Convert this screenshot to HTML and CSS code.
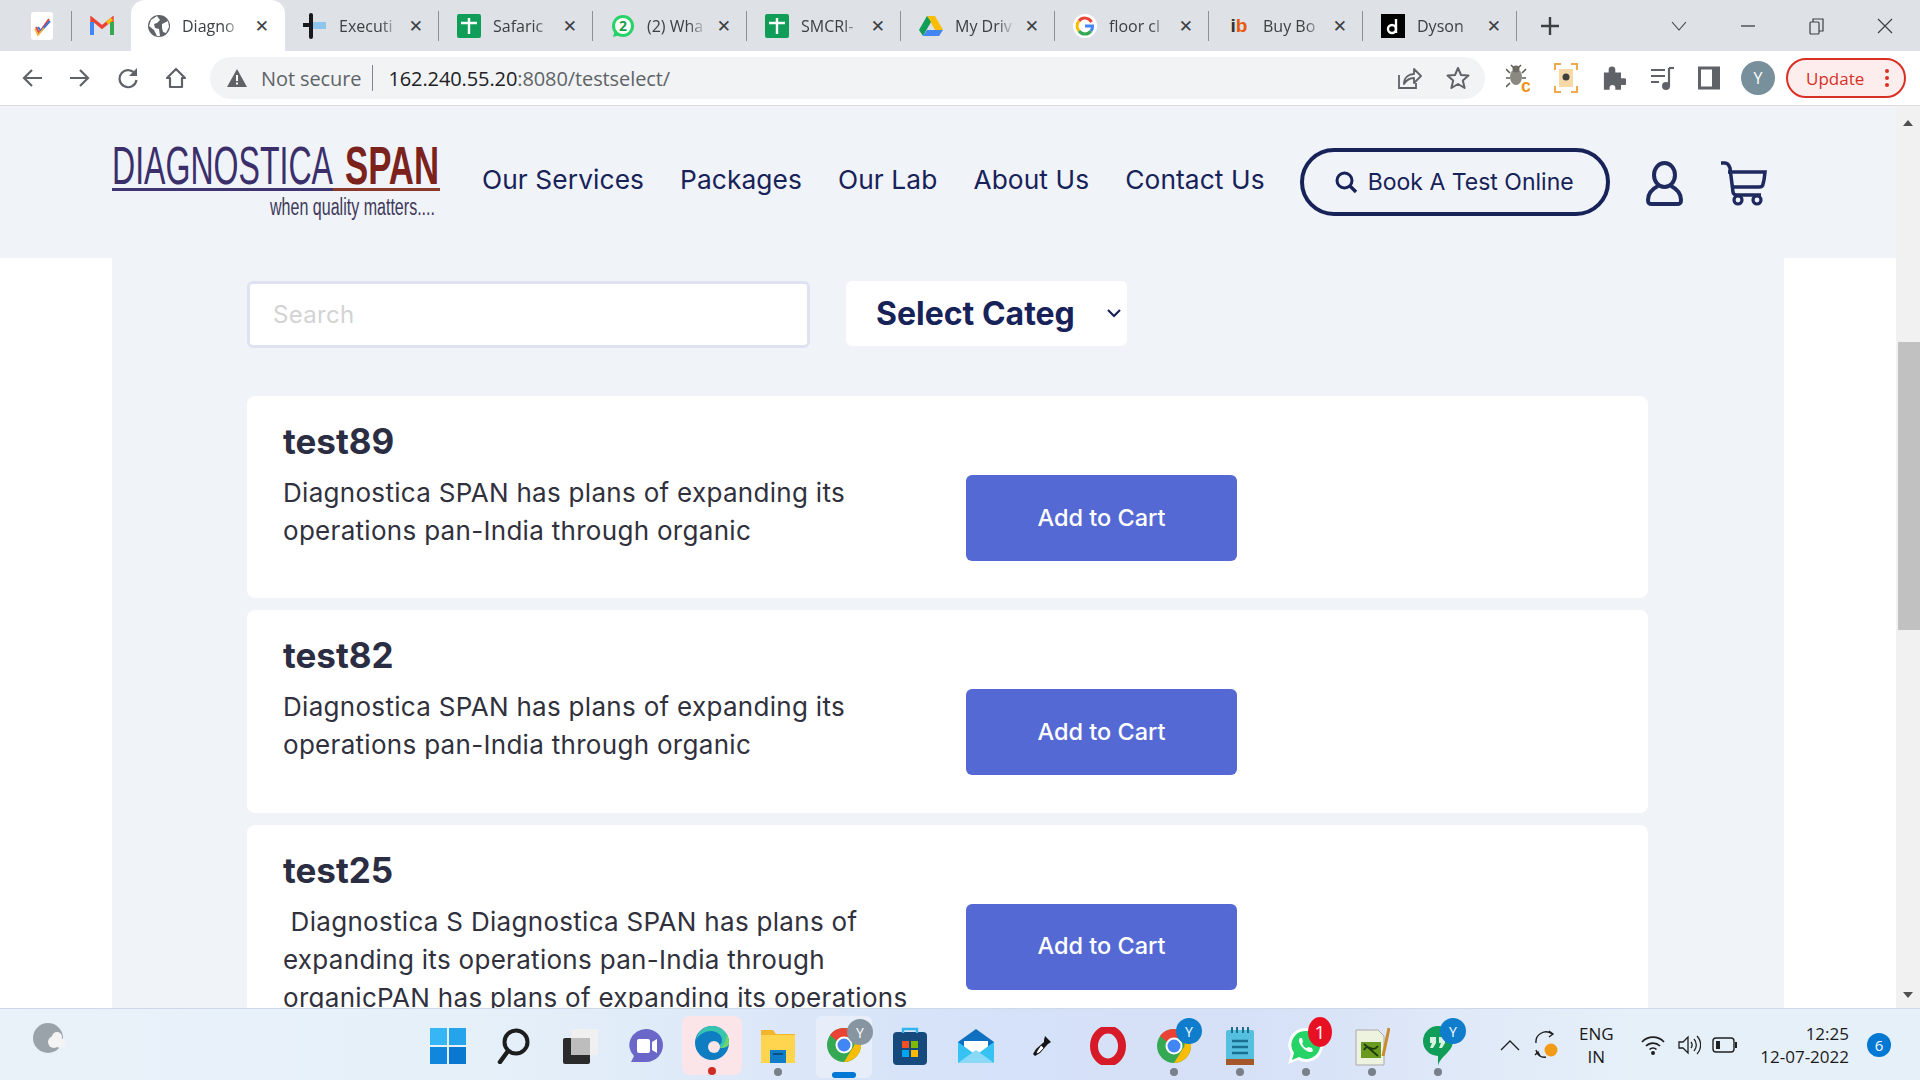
FILE: index.html
```html
<!DOCTYPE html>
<html lang="en">
<head>
<meta charset="utf-8">
<title>Diagnostica SPAN</title>
<link rel="stylesheet" href="styles.css">
</head>
<body>
<div class="screen">
  <div class="tabstrip">
    <div class="tab pinned sep"><svg width="24" height="28" viewBox="0 0 24 28"><rect x="1" y="0" width="22" height="28" rx="3" fill="#fff"/><path d="M6 15l3 6L19 7" fill="none" stroke="#e0483e" stroke-width="2"/><path d="M8 15l3 4L20 9" fill="none" stroke="#3a6fd8" stroke-width="2"/><path d="M5 17l3 6 6-7" fill="none" stroke="#f3b23c" stroke-width="1.6"/></svg></div>
    <div class="tab pinned"><svg width="24" height="20" viewBox="0 0 24 20"><path d="M2 18V3l10 8 10-8v15" fill="none" stroke="#ea4335" stroke-width="3.4"/><path d="M2 6v13" stroke="#4285f4" stroke-width="4"/><path d="M22 6v13" stroke="#34a853" stroke-width="4"/><path d="M17 7l5-4" stroke="#fbbc04" stroke-width="3.4"/></svg></div>
    <div class="tab active"><svg width="22" height="22" viewBox="0 0 22 22"><circle cx="11" cy="11" r="11" fill="#5f6368"/><path d="M9 1l3 4-3 3-3 1 1 4 4 1 1 7-3 0-3-6-5-4 2-6zM14 9l6-3 1 6-3 6-3-1-1-4z" fill="#fff"/></svg><span class="title">Diagno</span><span class="x">✕</span></div>
    <div class="tab sep"><svg width="24" height="26" viewBox="0 0 24 26"><rect x="6" y="0" width="4" height="26" rx="2" fill="#16181c"/><rect x="0" y="10" width="10" height="4" fill="#16181c"/><rect x="10" y="9" width="13" height="7" fill="#8ec6ee"/></svg><span class="title">Executi</span><span class="x">✕</span></div>
    <div class="tab sep"><svg width="24" height="24" viewBox="0 0 24 24"><rect width="24" height="24" rx="2" fill="#0f9d58"/><path d="M12 4v16M4 9h16" stroke="#fff" stroke-width="2.4"/></svg><span class="title">Safaric</span><span class="x">✕</span></div>
    <div class="tab sep"><svg width="24" height="24" viewBox="0 0 24 24"><circle cx="12" cy="12" r="11" fill="#25d366"/><path d="M2 23l2-7 5 5z" fill="#25d366"/><circle cx="12" cy="12" r="8" fill="#fff"/><text x="12" y="17" text-anchor="middle" class="wa-n">2</text></svg><span class="title">(2) Wha</span><span class="x">✕</span></div>
    <div class="tab sep"><svg width="24" height="24" viewBox="0 0 24 24"><rect width="24" height="24" rx="2" fill="#0f9d58"/><path d="M12 4v16M4 9h16" stroke="#fff" stroke-width="2.4"/></svg><span class="title">SMCRI-</span><span class="x">✕</span></div>
    <div class="tab sep"><svg width="24" height="22" viewBox="0 0 24 22"><path d="M8 1h8l8 14h-8z" fill="#fbbc04"/><path d="M8 1L0 15l4 6 8-14z" fill="#0f9d58"/><path d="M4 21h16l4-6H8z" fill="#4285f4"/></svg><span class="title">My Driv</span><span class="x">✕</span></div>
    <div class="tab sep"><svg width="24" height="24" viewBox="0 0 24 24"><circle cx="12" cy="12" r="12" fill="#fff"/><path d="M18.5 8A7.500 7.500 0 0 0 6 7" fill="none" stroke="#ea4335" stroke-width="3"/><path d="M6 7a7.500 7.500 0 0 0 0 10" fill="none" stroke="#fbbc04" stroke-width="3"/><path d="M6 17a7.500 7.500 0 0 0 12 0" fill="none" stroke="#34a853" stroke-width="3"/><path d="M18 17a7.500 7.500 0 0 0 1.500-5H12" fill="none" stroke="#4285f4" stroke-width="3"/></svg><span class="title">floor cl</span><span class="x">✕</span></div>
    <div class="tab sep"><span class="ib"><b>i</b><i>b</i></span><span class="title">Buy Bo</span><span class="x">✕</span></div>
    <div class="tab sep"><svg width="24" height="24" viewBox="0 0 24 24"><rect width="24" height="24" fill="#000"/><circle cx="11" cy="15" r="4" fill="none" stroke="#fff" stroke-width="2.400"/><path d="M15 5v14" stroke="#fff" stroke-width="2.400"/></svg><span class="title">Dyson</span><span class="x">✕</span></div>
    <div class="plus"><svg width="20" height="20" viewBox="0 0 20 20"><path d="M10 1v18M1 10h18" stroke="#3c4043" stroke-width="2.400"/></svg></div>
    <div class="winctl">
      <svg class="wc-a" width="18" height="10" viewBox="0 0 18 10"><path d="M2 1l7 8 7-8" fill="none" stroke="#3c4043" stroke-width="1.100"/></svg>
      <svg class="wc-b" width="16" height="2" viewBox="0 0 16 2"><path d="M1 1h14" stroke="#3c4043" stroke-width="1.300"/></svg>
      <svg class="wc-c" width="18" height="18" viewBox="0 0 18 18"><rect x="2" y="5" width="9" height="12" rx="1" fill="none" stroke="#3c4043" stroke-width="1.200"/><path d="M5 5V2h10v12h-4" fill="none" stroke="#3c4043" stroke-width="1.200"/></svg>
      <svg class="wc-d" width="16" height="16" viewBox="0 0 16 16"><path d="M1 1l14 14M15 1L1 15" stroke="#3c4043" stroke-width="1.200"/></svg>
    </div>
  </div>

  <div class="toolbar">
    <svg class="nav-i first" width="22" height="20" viewBox="0 0 22 20"><path d="M21 10H3M11 2l-8 8 8 8" fill="none" stroke="#5f6368" stroke-width="2.200"/></svg>
    <svg class="nav-i" width="22" height="20" viewBox="0 0 22 20"><path d="M1 10h18M11 2l8 8-8 8" fill="none" stroke="#5f6368" stroke-width="2.200"/></svg>
    <svg class="nav-i" width="22" height="22" viewBox="0 0 22 22"><path d="M18.500 7.500A8.500 8.500 0 1 0 19.500 13" fill="none" stroke="#5f6368" stroke-width="2.200"/><path d="M20 1v8h-8z" fill="#5f6368"/></svg>
    <svg class="nav-i" width="22" height="22" viewBox="0 0 22 22"><path d="M11 2L2 11h3v9h12v-9h3z" fill="none" stroke="#5f6368" stroke-width="2.200" stroke-linejoin="round"/></svg>
    <div class="omni">
      <svg width="20" height="18" viewBox="0 0 20 18"><path d="M10 0l10 18H0z" fill="#5f6368"/><path d="M10 6v6M10 13.500v2" stroke="#fff" stroke-width="2"/></svg>
      <span class="ns">Not secure</span><span class="omni-sep"></span>
      <span class="url"><b>162.240.55.20</b>:8080/testselect/</span>
      <svg class="share" width="26" height="24" viewBox="0 0 26 24"><path d="M3 9v13h17v-5" fill="none" stroke="#5f6368" stroke-width="1.800"/><path d="M8 18c0-7 5-10 10-10V3l7 7-7 7v-5c-4 0-7 1-10 6z" fill="none" stroke="#5f6368" stroke-width="1.800" stroke-linejoin="round"/></svg>
      <svg class="star" width="24" height="24" viewBox="0 0 24 24"><path d="M12 2l3 7 7.500.6-5.700 4.900 1.800 7.500L12 18l-6.600 4 1.800-7.500L1.500 9.600 9 9z" fill="none" stroke="#5f6368" stroke-width="2" stroke-linejoin="round"/></svg>
    </div>
    <div class="exts">
      <svg width="24" height="30" viewBox="0 0 24 30"><ellipse cx="10" cy="14" rx="6" ry="8" fill="#8a8a80"/><circle cx="10" cy="6" r="3.500" fill="#6d6d66"/><path d="M4 10L0 6M4 15H0M4 20l-4 4M16 10l4-4M16 15h4M5 2l3 3M15 2l-3 3" stroke="#5f5f58" stroke-width="1.600"/><text x="15" y="29" class="ext-c">c</text></svg>
      <svg width="24" height="30" viewBox="0 0 24 30"><rect x="5" y="6" width="14" height="18" fill="#f7d9a8"/><path d="M1 7V1h6M17 1h6v6M23 23v6h-6M7 29H1v-6" fill="none" stroke="#f0a94c" stroke-width="2"/><circle cx="12" cy="14" r="3.500" fill="#40403c"/></svg>
      <svg width="24" height="26" viewBox="0 0 24 26"><path d="M2 8h5V5a3.500 3.500 0 0 1 7 0v3h6v6h3a3.500 3.500 0 0 1 0 7h-3v5H14v-2a3 3 0 0 0-6 0v2H2z" fill="#5f6368" transform="scale(.95)"/></svg>
      <svg width="24" height="26" viewBox="0 0 24 26"><path d="M1 5h14M1 11h14M1 17h8" stroke="#5f6368" stroke-width="2.200"/><path d="M19 3v18" stroke="#5f6368" stroke-width="2.200"/><circle cx="16" cy="21" r="4" fill="#5f6368"/><path d="M19 3h5" stroke="#5f6368" stroke-width="2.200"/></svg>
      <svg width="22" height="24" viewBox="0 0 22 24"><rect x="1.500" y="2" width="19" height="20" fill="none" stroke="#5f6368" stroke-width="3"/><rect x="14" y="2" width="7" height="20" fill="#5f6368"/></svg>
      <div class="avatar">Y</div>
    </div>
    <div class="update"><span>Update</span><i class="dots"><em></em><em></em><em></em></i></div>
  </div>

  <div class="browser">
    <div class="viewport">
      <header class="site-head">
        <svg class="logo" width="328" height="80" viewBox="0 0 328 80">
          <text x="0" y="42" class="lg-a" textLength="221" lengthAdjust="spacingAndGlyphs">DIAGNOSTICA</text>
          <text x="233" y="42" class="lg-b" textLength="94" lengthAdjust="spacingAndGlyphs">SPAN</text>
          <rect x="0" y="46" width="221" height="3" fill="#3f3570"/><rect x="221" y="46" width="107" height="3" fill="#8b3a2c"/>
          <text x="158" y="73" class="lg-c" textLength="165" lengthAdjust="spacingAndGlyphs">when quality matters....</text>
        </svg>
        <nav class="menu"><a>Our Services</a><a>Packages</a><a>Our Lab</a><a>About Us</a><a>Contact Us</a></nav>
        <div class="book"><svg width="24" height="24" viewBox="0 0 24 24"><circle cx="10.500" cy="10.500" r="7.500" fill="none" stroke="#172259" stroke-width="3"/><path d="M16 16l6 6" stroke="#172259" stroke-width="3.400"/></svg><span>Book A Test Online</span></div>
        <svg class="u-ic" width="37" height="45" viewBox="0 0 37 45"><ellipse cx="18.500" cy="14" rx="10.500" ry="12" fill="none" stroke="#1e2a5e" stroke-width="4"/><path d="M12 25C6 28 2 33 2 39c0 3 1 4 4 4h25c3 0 4-1 4-4 0-6-4-11-10-14" fill="none" stroke="#1e2a5e" stroke-width="4" stroke-linejoin="round"/></svg>
        <svg class="c-ic" width="47" height="45" viewBox="0 0 47 45"><path d="M1 2h4c3 0 4 2 5 5l3 24c0 2 2 3 4 3h24" fill="none" stroke="#1e2a5e" stroke-width="3.500"/><path d="M8 11h37l-1 8M12 26h27c3 0 4-1 4-3l1-4" fill="none" stroke="#1e2a5e" stroke-width="3.500"/><circle cx="18" cy="39" r="4" fill="none" stroke="#1e2a5e" stroke-width="3.200"/><circle cx="37" cy="39" r="4" fill="none" stroke="#1e2a5e" stroke-width="3.200"/></svg>
      </header>
      <main class="main">
        <div class="filters">
          <div class="search">Search</div>
          <div class="select"><span>Select Categ</span><svg width="14" height="9" viewBox="0 0 14 9"><path d="M1 1l6 6 6-6" fill="none" stroke="#172259" stroke-width="2.200"/></svg></div>
        </div>
        <article class="card">
          <div><h2>test89</h2><p>Diagnostica SPAN has plans of expanding its operations pan-India through organic</p></div>
          <a class="cart">Add to Cart</a>
        </article>
        <article class="card">
          <div><h2>test82</h2><p>Diagnostica SPAN has plans of expanding its operations pan-India through organic</p></div>
          <a class="cart">Add to Cart</a>
        </article>
        <article class="card">
          <div><h2>test25</h2><p>&nbsp;Diagnostica S Diagnostica SPAN has plans of expanding its operations pan-India through organicPAN has plans of expanding its operations pan-India through organic</p></div>
          <a class="cart">Add to Cart</a>
        </article>
      </main>
    </div>
    <div class="scrollbar">
      <svg width="10" height="6" viewBox="0 0 10 6"><path d="M5 0l5 6H0z" fill="#505050"/></svg>
      <div class="track"><div class="thumb"></div></div>
      <svg width="10" height="6" viewBox="0 0 10 6"><path d="M5 6L0 0h10z" fill="#505050"/></svg>
    </div>
  </div>

  <footer class="taskbar">
    <svg class="widget" width="36" height="32" viewBox="0 0 36 32"><circle cx="16" cy="16" r="15" fill="#9ba3aa"/><circle cx="22" cy="20" r="6" fill="#f4f4f4"/><circle cx="28" cy="21" r="5" fill="#f4f4f4"/><circle cx="25" cy="15" r="5" fill="#f4f4f4"/></svg>
    <div class="apps">
      <div class="app"><svg width="36" height="36" viewBox="0 0 36 36"><rect width="17" height="17" fill="#37b6f6"/><rect x="19" width="17" height="17" fill="#25a4ec"/><rect y="19" width="17" height="17" fill="#1086dc"/><rect x="19" y="19" width="17" height="17" fill="#0a78d0"/></svg></div>
      <div class="app"><svg width="34" height="36" viewBox="0 0 34 36"><circle cx="19" cy="14" r="11.500" fill="none" stroke="#1d1d1d" stroke-width="4"/><path d="M11 23L3 34" stroke="#1d1d1d" stroke-width="4.500" stroke-linecap="round"/></svg></div>
      <div class="app"><svg width="36" height="36" viewBox="0 0 36 36"><rect x="9" y="1" width="27" height="26" rx="2" fill="#f0f0f0"/><rect x="1" y="10" width="27" height="26" rx="2" fill="#2b2b2b"/><rect x="9" y="10" width="19" height="17" fill="#bdbdbd"/></svg></div>
      <div class="app"><svg width="36" height="36" viewBox="0 0 36 36"><path d="M18 1a17 16 0 0 1 17 16c0 9-7 17-17 17H3l3-6a17 16 0 0 1 12-27z" fill="#6a67c8"/><rect x="9" y="11" width="13" height="14" rx="2" fill="#fff"/><path d="M24 14l5-3v14l-5-3z" fill="#fff"/></svg></div>
      <div class="app edge"><svg width="36" height="36" viewBox="0 0 36 36"><circle cx="18" cy="18" r="17" fill="#0f7dc2"/><path d="M2 15C4 5 12 1 18 1c10 0 17 8 17 17 0 4-5 5-9 5-3 0-5-1-5-2 5 0 7-3 7-6 0-5-5-9-11-9-5 0-12 3-15 9z" fill="#37c5b0"/><path d="M33 9a17 17 0 0 1 2 9c0 4-5 5-9 5 5-2 6-9 7-14z" fill="#6ed66c"/><circle cx="20" cy="22" r="6" fill="#fbe5e8"/></svg><i class="dot red"></i></div>
      <div class="app"><svg width="36" height="36" viewBox="0 0 36 36"><path d="M1 2h12l3 4h19v29H1z" fill="#f3b52e"/><rect x="1" y="7" width="34" height="28" fill="#ffd54f"/><path d="M10 22h16v13H10z" fill="#0f7dc8"/><path d="M13 26h10" stroke="#0a4f85" stroke-width="2"/></svg><i class="dot"></i></div>
      <div class="app chrome"><svg width="36" height="36" viewBox="0 0 36 36"><circle cx="18" cy="18" r="17" fill="#34a853"/><path d="M18 1a17 17 0 0 1 15 9H18a8 8 0 0 0-7 4L4 8A17 17 0 0 1 18 1z" fill="#ea4335"/><path d="M33 10a17 17 0 0 1-15 25l8-13a8 8 0 0 0 0-12z" fill="#fbbc04"/><circle cx="18" cy="18" r="8.500" fill="#fff"/><circle cx="18" cy="18" r="6.500" fill="#4285f4"/></svg><span class="pbadge grey">Y</span><i class="bar"></i></div>
      <div class="app"><svg width="34" height="38" viewBox="0 0 34 38"><rect x="0" y="5" width="34" height="33" rx="4" fill="#174a7c"/><path d="M10 6V2h14v4" fill="none" stroke="#32b5ee" stroke-width="2.400"/><rect x="9" y="14" width="7" height="7" fill="#f25022"/><rect x="18" y="14" width="7" height="7" fill="#7fba00"/><rect x="9" y="23" width="7" height="7" fill="#00a4ef"/><rect x="18" y="23" width="7" height="7" fill="#ffb900"/></svg></div>
      <div class="app"><svg width="36" height="36" viewBox="0 0 36 36"><path d="M18 1l18 13v21H0V14z" fill="#0f6fc0"/><path d="M6 13h24v10l-12 6-12-6z" fill="#fff"/><path d="M0 14l18 13 18-13v21H0z" fill="#36c2f2"/><path d="M0 35l18-13 18 13z" fill="#8ad9f7"/></svg></div>
      <div class="app"><svg width="20" height="22" viewBox="0 0 20 22"><path d="M13 1l6 6-3 2-1 1-7 8-5 3-2-2 3-5 8-7 0-2z" fill="#151515"/><path d="M9 10l3 3-5 5-3 1 1-3z" fill="#fff" stroke="#151515" stroke-width=".8"/></svg></div>
      <div class="app"><svg width="36" height="38" viewBox="0 0 36 38"><ellipse cx="18" cy="19" rx="14" ry="16.500" fill="none" stroke="#d71a27" stroke-width="8"/></svg></div>
      <div class="app"><svg width="36" height="36" viewBox="0 0 36 36"><circle cx="18" cy="18" r="17" fill="#34a853"/><path d="M18 1a17 17 0 0 1 15 9H18a8 8 0 0 0-7 4L4 8A17 17 0 0 1 18 1z" fill="#ea4335"/><path d="M33 10a17 17 0 0 1-15 25l8-13a8 8 0 0 0 0-12z" fill="#fbbc04"/><circle cx="18" cy="18" r="8.500" fill="#fff"/><circle cx="18" cy="18" r="6.500" fill="#4285f4"/></svg><span class="pbadge">Y</span><i class="dot"></i></div>
      <div class="app"><svg width="30" height="38" viewBox="0 0 30 38"><rect x="1" y="3" width="28" height="30" rx="2" fill="#55bfe0"/><path d="M7 0v6M12 0v6M18 0v6M23 0v6" stroke="#1a6f90" stroke-width="2"/><path d="M7 14h16M7 20h16M7 26h16" stroke="#1a6f90" stroke-width="2.600"/><rect x="1" y="32" width="28" height="6" fill="#a5562a"/></svg><i class="dot"></i></div>
      <div class="app"><svg width="38" height="38" viewBox="0 0 38 38"><path d="M19 1a17 17 0 1 1-8 32L1 37l3-10A17 17 0 0 1 19 1z" fill="#fff"/><path d="M19 4a14 14 0 1 1-7 26l-7 3 2-7A14 14 0 0 1 19 4z" fill="#25d366"/><path d="M13 11c-2 2-1 6 3 10s8 5 10 3l-1-3-4-1-1 1c-2 0-4-2-5-5l1-1-1-4z" fill="#fff"/></svg><span class="pbadge red">1</span><i class="dot"></i></div>
      <div class="app"><svg width="36" height="40" viewBox="0 0 36 40"><path d="M2 4h22l6 6v29H2z" fill="#eef3e0" stroke="#a9a9a9"/><rect x="7" y="16" width="20" height="16" fill="#6a9b20"/><path d="M10 24c4-8 8 4 14-4M10 18l14 12" stroke="#1d3b08" stroke-width="1.800" fill="none"/><path d="M29 30L35 2" stroke="#c98b2b" stroke-width="3"/></svg><i class="dot"></i></div>
      <div class="app"><svg width="30" height="42" viewBox="0 0 30 42"><path d="M15 1a15 15 0 0 1 15 15c0 11-13 15-15 25V31a15 15 0 0 1 0-30z" fill="#0f9d58"/><path d="M7 12h6v6l-3 5H7l2-5H7zM16 12h6v6l-3 5h-3l2-5h-2z" fill="#d6f3e1"/></svg><span class="pbadge">Y</span><i class="dot"></i></div>
    </div>
    <div class="tray">
      <svg class="t-caret" width="20" height="12" viewBox="0 0 20 12"><path d="M1 11l9-9 9 9" fill="none" stroke="#202020" stroke-width="1.400"/></svg>
      <svg class="t-sync" width="24" height="30" viewBox="0 0 24 30"><path d="M2 13A10 10 0 0 1 18 4M2 20c1 5 5 8 10 7" fill="none" stroke="#202020" stroke-width="1.400"/><path d="M15 1l4 3-4 3M1 25l3-3 2 4" fill="none" stroke="#202020" stroke-width="1.400"/><circle cx="17" cy="20" r="6.500" fill="#f39a17"/></svg>
      <div class="lang"><span>ENG</span><span>IN</span></div>
      <svg class="t-wifi" width="24" height="22" viewBox="0 0 24 22"><path d="M1 8a15 15 0 0 1 22 0M5 12a10 10 0 0 1 14 0M8.500 15.500a5 5 0 0 1 7 0" fill="none" stroke="#202020" stroke-width="1.700"/><circle cx="12" cy="19" r="2" fill="#202020"/></svg>
      <svg class="t-vol" width="24" height="24" viewBox="0 0 24 24"><path d="M2 9v6h4l5 5V4L6 9z" fill="none" stroke="#202020" stroke-width="1.300"/><path d="M14 9a5 5 0 0 1 0 6M17 6a9 9 0 0 1 0 12M20 3a13 13 0 0 1 0 18" fill="none" stroke="#202020" stroke-width="1.300"/></svg>
      <svg class="t-bat" width="26" height="16" viewBox="0 0 26 16"><rect x="1" y="1" width="21" height="14" rx="3" fill="none" stroke="#202020" stroke-width="1.400"/><rect x="4" y="4" width="4" height="8" fill="#202020"/><rect x="23" y="5" width="2" height="6" fill="#202020"/></svg>
      <div class="clock"><span>12:25</span><span>12-07-2022</span></div>
      <div class="notif">6</div>
    </div>
  </footer>
</div>
</body>
</html>
```

FILE: styles.css
```css
* { box-sizing: border-box; }
html, body { margin: 0; padding: 0; height: 100%; overflow: hidden; }
body { font-family: "Liberation Sans", Arial, sans-serif; }
.screen { width: 1920px; height: 1080px; display: flex; flex-direction: column; overflow: hidden; }

/* tab strip */
.tabstrip { height: 51px; flex: none; background: #dee1e6; display: flex; padding-left: 12px; font-family: "Open Sans", sans-serif; }
.tab { width: 154px; height: 51px; display: flex; align-items: center; padding: 0 16px 0 18px; position: relative; flex: none; }
.tab.sep::after { content: ""; position: absolute; right: 0; top: 11px; height: 30px; width: 1px; background: #8e9298; }
.tab.pinned { width: 60px; justify-content: center; padding: 0; }
.tab.pinned + .tab.pinned { width: 59px; }
.tab.active { background: #fff; border-radius: 14px 14px 0 0; width: 154px; padding-left: 17px; }
.title { margin-left: 12px; width: 60px; white-space: nowrap; font-size: 16px; color: #3c4043; -webkit-mask-image: linear-gradient(90deg, #000 70%, transparent 100%); mask-image: linear-gradient(90deg, #000 70%, transparent 100%); flex: none; }
.x { margin-left: auto; font-size: 17px; color: #3c4043; font-family: "DejaVu Sans", sans-serif; }
.ib { width: 24px; font-size: 19px; font-family: "Liberation Sans", sans-serif; text-align: center; }
.ib b { color: #333; font-weight: 700; }
.ib i { color: #e8590c; font-style: normal; font-weight: 700; }
.wa-n { font: 700 14px "Open Sans", sans-serif; fill: #1a9e4b; }
.plus { margin-left: 23px; height: 51px; display: flex; align-items: center; }
.winctl { margin-left: auto; position: relative; height: 51px; display: flex; align-items: center; padding-right: 27px; }
.wc-b { margin-left: 52px; }
.wc-c { margin-left: 52px; }
.wc-d { margin-left: 51px; }

/* toolbar */
.toolbar { height: 55px; flex: none; background: #fff; border-bottom: 1px solid #dadce0; display: flex; align-items: center; font-family: "Open Sans", sans-serif; }
.nav-i { margin-left: 26px; flex: none; }
.nav-i.first { margin-left: 21px; }
.omni { margin-left: 23px; width: 1275px; height: 42px; border-radius: 21px; background: #f1f3f4; display: flex; align-items: center; padding-left: 17px; }
.ns { margin-left: 14px; font-size: 20px; color: #5f6368; letter-spacing: -.1px; }
.omni-sep { width: 1px; height: 26px; background: #80868b; margin: 0 15px 0 11px; }
.url { font-size: 20px; color: #5f6368; letter-spacing: -.1px; }
.url b { font-weight: 400; color: #202124; }
.share { margin-left: auto; }
.star { margin-left: 24px; margin-right: 15px; }
.exts { display: flex; align-items: center; gap: 24px; margin-left: 21px; }
.ext-c { font: 700 18px "Liberation Sans", sans-serif; fill: #f0931e; }
.avatar { width: 34px; height: 34px; border-radius: 50%; background: #78909c; color: #fff; font-size: 16px; display: flex; align-items: center; justify-content: center; margin-left: -3px; }
.update { margin-left: 11px; width: 120px; height: 40px; border: 2px solid #d93025; border-radius: 20px; background: #fdeeed; color: #d93025; display: flex; align-items: center; justify-content: space-between; padding: 0 15px 0 18px; font-size: 17px; }
.dots { display: flex; flex-direction: column; gap: 3px; }
.dots em { width: 4px; height: 4px; border-radius: 50%; background: #d93025; display: block; }

/* page */
.browser { flex: 1; display: flex; min-height: 0; }
.viewport { flex: 1; min-width: 0; overflow: hidden; background: #fff; font-family: Inter, sans-serif; }
.site-head { height: 152px; background: #f0f3f8; display: flex; align-items: center; padding-left: 112px; color: #172259; }
.logo { flex: none; }
.lg-a { font: 400 54px "Liberation Sans", sans-serif; fill: #3a2f6b; }
.lg-b { font: 700 54px "Liberation Sans", sans-serif; fill: #7a221b; }
.lg-c { font: 400 23px "Liberation Sans", sans-serif; fill: #3f3a5c; }
.menu { display: flex; gap: 36px; margin: 0 0 5px 42px; font-size: 26.3px; letter-spacing: .1px; }
.menu a { color: #172259; white-space: nowrap; }
.book { margin-left: 35px; width: 310px; height: 68px; border: 4px solid #172259; border-radius: 34px; display: flex; align-items: center; padding-left: 30px; gap: 10px; font-size: 23px; flex: none; }
.u-ic { margin-left: 36px; flex: none; margin-top: 2px; }
.c-ic { margin-left: 37px; flex: none; margin-top: 2px; }

.main { margin: 0 112px; background: #f0f3f8; padding: 23px 135px 0; width: 1672px; }
.filters { display: flex; align-items: flex-start; gap: 36px; margin-bottom: 48px; }
.search { width: 563px; height: 67px; border: 3px solid #dfe3f1; border-radius: 6px; background: #fff; padding-left: 23px; display: flex; align-items: center; font-size: 24px; letter-spacing: .3px; color: #d3d3d3; }
.select { width: 281px; height: 65px; background: #fff; border-radius: 6px; display: flex; align-items: center; justify-content: space-between; padding: 0 6px 0 30px; font-size: 32px; font-weight: 700; color: #172259; white-space: nowrap; }
.card { width: 1401px; height: 202.4px; margin-bottom: 12px; background: #fff; border-radius: 8px; padding: 24px 36px 0; display: grid; grid-template-columns: 645px 271px; column-gap: 38px; align-items: start; }
.card h2 { margin: 0; font-size: 35px; line-height: 42px; font-weight: 700; color: #2b2d42; }
.card p { margin: 12px 0 0; font-size: 26px; line-height: 38px; letter-spacing: .3px; color: #30313d; }
.cart { margin-top: 55px; height: 86px; padding-bottom: 2px; background: #5469d4; border-radius: 6px; color: #fff; font-size: 23.5px; font-weight: 500; display: flex; align-items: center; justify-content: center; }

.scrollbar { width: 24px; flex: none; background: #f1f1f1; display: flex; flex-direction: column; align-items: center; padding: 14px 0 10px; }
.track { flex: 1; width: 100%; padding-top: 216px; }
.thumb { height: 288px; background: #c1c1c1; margin-left: 2px; }

/* taskbar */
.taskbar { height: 72px; flex: none; border-top: 1px solid #cdd8e8; background: linear-gradient(90deg, #e9f2f9 0%, #e6f0f9 25%, #d5e2f8 50%, #d6e0f7 65%, #e6f0f9 85%, #e6f0f9 100%); display: flex; align-items: center; padding-left: 32px; font-family: "Open Sans", sans-serif; color: #1a1a1a; }
.widget { flex: none; margin-top: -14px; }
.apps { display: flex; margin-left: 347px; align-items: center; }
.app { width: 66px; height: 71px; display: flex; align-items: center; justify-content: center; position: relative; padding-bottom: 0; flex: none; }
.app > svg { margin-top: 2px; }
.edge { background: #fbe5e8; border-radius: 8px; margin: 7px 3px 5px; width: 60px; height: 59px; }
.edge > svg { margin-top: -5px; }
.chrome { background: #e8eef9; border-radius: 6px; margin: 7px 5px 2px; width: 56px; height: 62px; }
.chrome > svg { margin-top: -5px; }
.dot { position: absolute; left: 50%; bottom: 4px; width: 8px; height: 8px; margin-left: -4px; border-radius: 50%; background: #7a8089; }
.dot.red { background: #d02c26; bottom: -1px; }
.edge .dot { bottom: 0; }
.bar { position: absolute; left: 50%; bottom: 0; margin-left: -12px; width: 24px; height: 6px; border-radius: 3px; background: #0078d4; }
.pbadge { position: absolute; top: 9px; left: 50%; margin-left: 2px; width: 26px; height: 26px; border-radius: 50%; background: #0f7dcb; color: #fff; font-size: 14px; display: flex; align-items: center; justify-content: center; }
.pbadge.grey { background: #86959f; top: 3px; margin-left: 3px; }
.pbadge.red { background: #e81123; font-size: 19px; width: 24px; height: 30px; top: 8px; }
.tray { margin-left: auto; display: flex; align-items: center; padding-right: 29px; }
.t-sync { margin-left: 14px; }
.lang { margin-left: 16px; display: flex; flex-direction: column; align-items: center; font-size: 17px; line-height: 23px; width: 44px; }
.t-wifi { margin-left: 23px; }
.t-vol { margin-left: 12px; }
.t-bat { margin-left: 11px; }
.clock { margin-left: 22px; display: flex; flex-direction: column; align-items: flex-end; font-size: 17px; line-height: 23px; white-space: nowrap; }
.notif { margin-left: 18px; width: 24px; height: 24px; border-radius: 50%; background: #0078d4; color: #fff; font-size: 15px; display: flex; align-items: center; justify-content: center; }
```
